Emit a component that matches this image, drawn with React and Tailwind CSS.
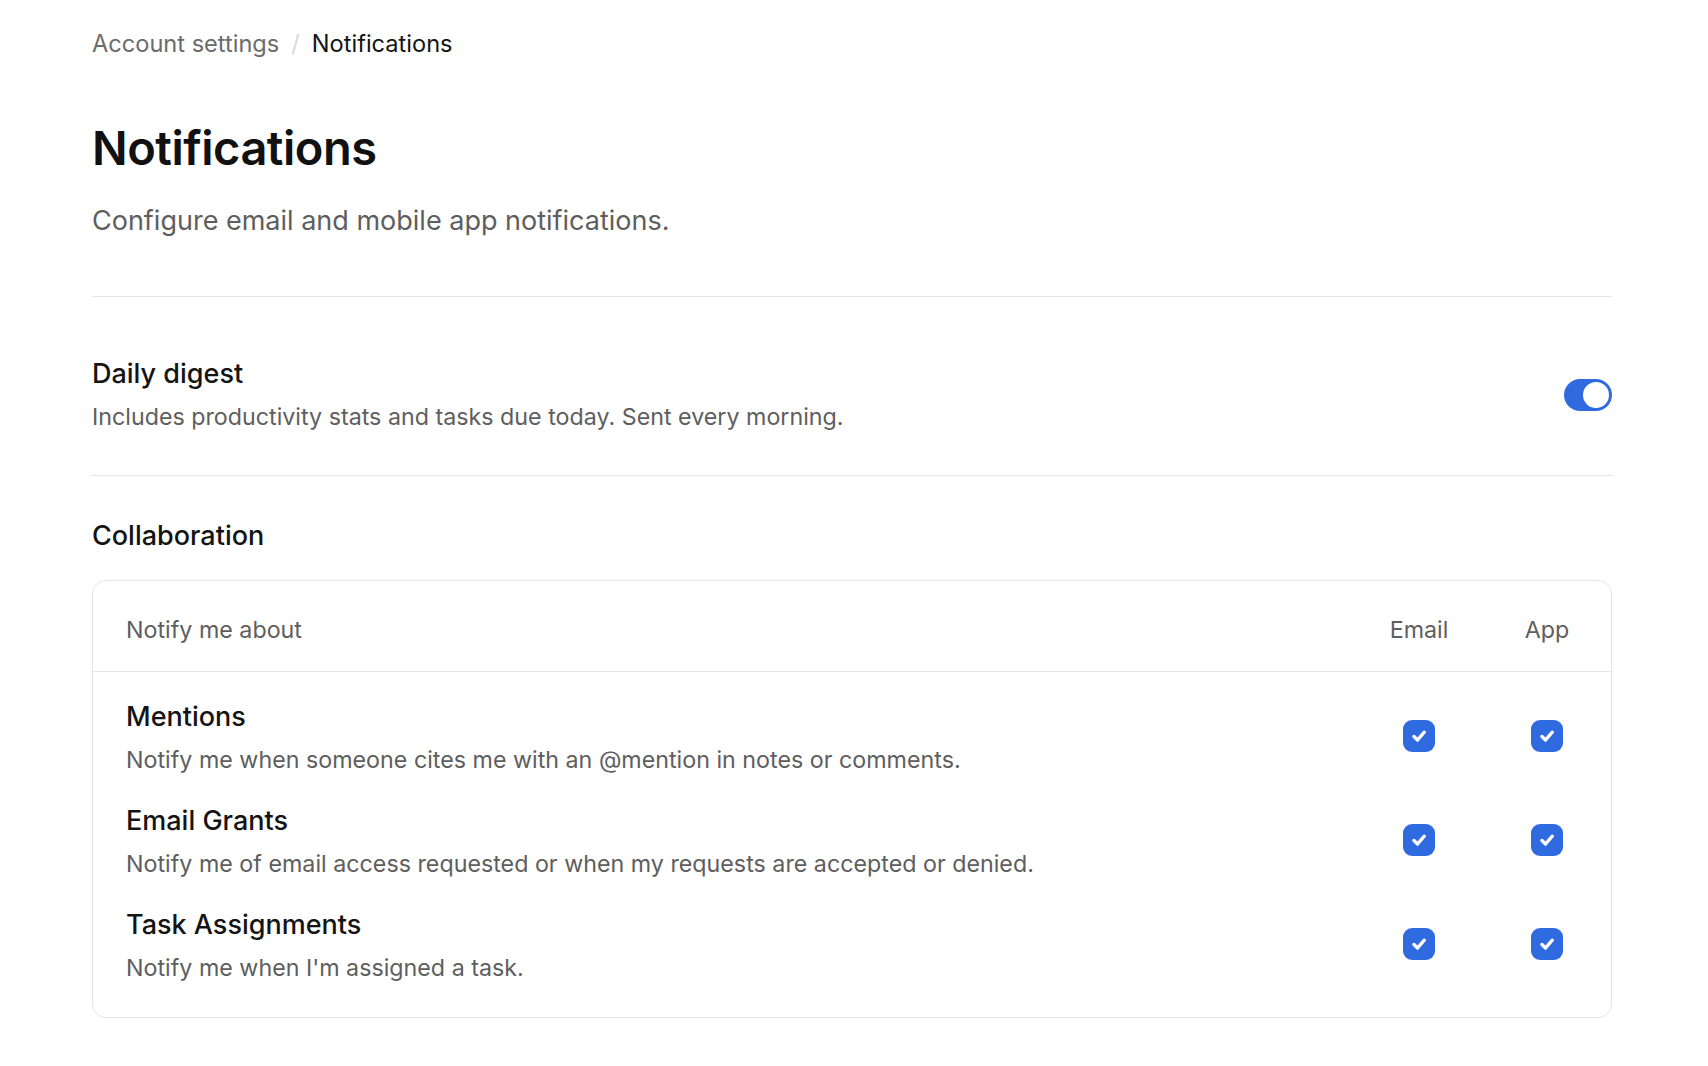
import React from "react";

function Check() {
  return (
    <div className="w-[32px] h-[32px] rounded-[9px] bg-[#2f6ae1] flex items-center justify-center">
      <svg width="32" height="32" viewBox="0 0 32 32" fill="none">
        <path d="M11 16.5l3.5 3.5 6.8-7.8" stroke="white" strokeWidth="3.4" strokeLinecap="round" strokeLinejoin="round" />
      </svg>
    </div>
  );
}

const rows = [
  { t: "Mentions", d: "Notify me when someone cites me with an @mention in notes or comments." },
  { t: "Email Grants", d: "Notify me of email access requested or when my requests are accepted or denied." },
  { t: "Task Assignments", d: "Notify me when I'm assigned a task." },
];

export default function App() {
  return (
    <div className="min-h-screen bg-white px-[92px] pt-[28px] pr-[96px]" style={{ fontFamily: "Inter, 'Noto Sans', sans-serif" }}>
      <div className="flex items-center h-[32px] text-[23.6px]">
        <span className="text-[#6b6b6b]">Account settings</span>
        <span className="text-[#d9d9d9] mx-[12px]">/</span>
        <span className="text-[#141414]">Notifications</span>
      </div>
      <h1 className="mt-[60px] text-[47px] leading-[56px] font-semibold text-[#111111] tracking-[-0.5px]">Notifications</h1>
      <p className="mt-[27px] text-[27px] leading-[36px] text-[#5e5e5e]">Configure email and mobile app notifications.</p>
      <div className="mt-[57px] h-px bg-[#e5e5e5]" />
      <div className="mt-[60px] flex items-center justify-between">
        <div>
          <div className="text-[27px] leading-[34px] font-medium text-[#141414]">Daily digest</div>
          <div className="mt-[10px] text-[23.25px] leading-[32px] text-[#5e5e5e]">Includes productivity stats and tasks due today. Sent every morning.</div>
        </div>
        <div className="w-[48px] h-[32px] rounded-full bg-[#2f6ae1] flex items-center justify-end px-[3px]">
          <div className="w-[26px] h-[26px] rounded-full bg-white" />
        </div>
      </div>
      <div className="mt-[42px] h-px bg-[#e5e5e5]" />
      <div className="mt-[43px] text-[27px] leading-[34px] font-medium text-[#141414]">Collaboration</div>
      <div className="mt-[27px] border border-[#e5e5e5] rounded-[14px]">
        <div className="h-[91px] flex items-center pt-[9px] pl-[33px] border-b border-[#e5e5e5] text-[23.25px] text-[#5e5e5e]">
          <div className="flex-1">Notify me about</div>
          <div className="w-[128px] text-center">Email</div>
          <div className="w-[128px] text-center">App</div>
        </div>
        <div className="pt-[28px] pb-[33px] flex flex-col gap-[28px]">
          {rows.map((r) => (
            <div key={r.t} className="flex items-center pl-[33px]">
              <div className="flex-1">
                <div className="text-[27px] leading-[34px] font-medium text-[#141414]">{r.t}</div>
                <div className="mt-[10px] text-[23.25px] leading-[32px] text-[#5e5e5e]">{r.d}</div>
              </div>
              <div className="w-[128px] flex justify-center mb-[4px]"><Check /></div>
              <div className="w-[128px] flex justify-center mb-[4px]"><Check /></div>
            </div>
          ))}
        </div>
      </div>
    </div>
  );
}
